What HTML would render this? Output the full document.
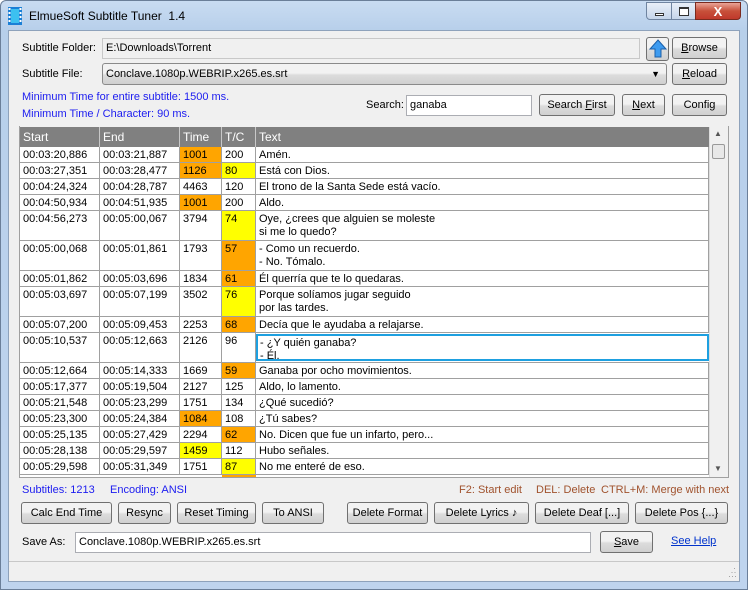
<!DOCTYPE html>
<html><head><meta charset="utf-8"><style>
*{box-sizing:border-box;margin:0;padding:0}
body{width:748px;height:590px;overflow:hidden;font-family:"Liberation Sans",sans-serif;font-size:11px;background:#fff;position:relative;color:#000}
.win{position:absolute;left:0;top:0;width:748px;height:590px;background:linear-gradient(#c9dcf2,#b7cfea 30px,#bfd4ee);border:1px solid #6b7f99;border-radius:6px 6px 0 0}
.client{position:absolute;left:8px;top:30px;width:732px;height:552px;background:#f0f0f0;border:1px solid #8ea2bb}
.a{position:absolute;white-space:nowrap}
.btn{position:absolute;height:22px;border:1px solid #707070;border-radius:3px;background:linear-gradient(#f2f2f2 45%,#dcdcdc 55%,#d0d0d0);text-align:center;line-height:20px;font-size:11px}
.inp{position:absolute;height:21px;border:1px solid #abadb3;background:#fff;line-height:19px;padding-left:3px}
.blue{color:#1c1cf0}
.brn{color:#a0522d}
.row{position:absolute;left:20px;width:689px;border-bottom:1px solid #a0a0a0;background:#fff}
.row div{position:absolute;top:0;bottom:0;border-right:1px solid #a0a0a0;padding:2px 0 0 3px;line-height:13px}
.c1{left:0;width:80px}.c2{left:80px;width:80px}.c3{left:160px;width:42px}.c4{left:202px;width:34px}.c5{left:236px;width:453px}
.o{background:#ffa500}.y{background:#ffff00}
.hd{position:absolute;left:20px;top:127px;width:689px;height:20px;background:#808080;color:#fff}
.hd div{position:absolute;top:0;height:20px;border-right:1px solid #c8c8c8;padding:3px 0 0 3px;font-size:12px}
</style></head><body>
<div class="win">
<svg class="a" style="left:7px;top:6px" width="14" height="18"><rect width="14" height="18" fill="#1a7fd6"/><rect x="3" y="2" width="8" height="14" fill="#3cc0f0"/><g fill="#fff"><rect x="0.5" y="1" width="2" height="2"/><rect x="0.5" y="5" width="2" height="2"/><rect x="0.5" y="9" width="2" height="2"/><rect x="0.5" y="13" width="2" height="2"/><rect x="11.5" y="1" width="2" height="2"/><rect x="11.5" y="5" width="2" height="2"/><rect x="11.5" y="9" width="2" height="2"/><rect x="11.5" y="13" width="2" height="2"/></g></svg>
<div class="a" style="left:28px;top:8px;font-size:12px">ElmueSoft Subtitle Tuner&nbsp; 1.4</div>
<div class="a" style="left:645px;top:1px;width:26px;height:18px;border:1px solid #6f84a0;border-radius:0 0 0 4px;background:linear-gradient(#e8eff8,#c5d5ea)"><div class="a" style="left:8px;top:10px;width:9px;height:3px;border:1px solid #333;background:#fff"></div></div>
<div class="a" style="left:670px;top:1px;width:25px;height:18px;border:1px solid #6f84a0;background:linear-gradient(#e8eff8,#c5d5ea)"><div class="a" style="left:7px;top:4px;width:10px;height:9px;border:1px solid #333;border-top-width:2px;background:#fff"></div></div>
<div class="a" style="left:694px;top:1px;width:46px;height:18px;border:1px solid #7a2a1e;border-radius:0 0 4px 0;background:linear-gradient(#e9a497,#c8503a 50%,#c0392b);color:#fff;font-weight:bold;text-align:center;line-height:17px;font-size:13px">X</div>
</div>
<div class="client"></div>
<div class="a" style="left:22px;top:42px">Subtitle Folder:</div>
<div class="inp" style="left:102px;top:38px;width:538px;background:#f0f0f0;border-color:#c8c8c8">E:\Downloads\Torrent</div>
<div class="btn" style="left:646px;top:37px;width:23px;height:24px"><svg width="20" height="20" style="margin-top:1px"><path d="M10 1 L18 10 H13 V18 H7 V10 H2 Z" fill="#3d9bf0" stroke="#1b5fa8"/></svg></div>
<div class="btn" style="left:672px;top:37px;width:55px"><u>B</u>rowse</div>
<div class="a" style="left:22px;top:68px">Subtitle File:</div>
<div class="btn" style="left:102px;top:63px;width:565px;text-align:left;padding-left:3px;border-color:#8a8a8a">Conclave.1080p.WEBRIP.x265.es.srt<span style="position:absolute;right:6px;font-size:9px">▼</span></div>
<div class="btn" style="left:672px;top:63px;width:55px"><u>R</u>eload</div>
<div class="a blue" style="left:22px;top:91px">Minimum Time for entire subtitle: 1500 ms.</div>
<div class="a blue" style="left:22px;top:108px">Minimum Time / Character: 90 ms.</div>
<div class="a" style="left:366px;top:99px">Search:</div>
<div class="inp" style="left:406px;top:95px;width:126px">ganaba</div>
<div class="btn" style="left:539px;top:94px;width:76px">Search <u>F</u>irst</div>
<div class="btn" style="left:622px;top:94px;width:43px"><u>N</u>ext</div>
<div class="btn" style="left:672px;top:94px;width:55px">Config</div>

<div class="hd"><div style="left:0;width:80px">Start</div><div style="left:80px;width:80px">End</div><div style="left:160px;width:42px">Time</div><div style="left:202px;width:34px">T/C</div><div style="left:236px;width:453px;border:none">Text</div></div>
<div class="a" style="left:19px;top:126px;width:710px;height:352px;border:1px solid #a0a0a0;border-top:none"></div>
<div class="a" style="left:709px;top:127px;width:18px;height:350px;background:#f0f0f0;border-left:1px solid #ddd"><div class="a" style="left:4px;top:2px;font-size:8px;color:#555">▲</div><div class="a" style="left:2px;top:17px;width:13px;height:15px;border:1px solid #999;border-radius:2px;background:#e8e8e8"></div><div class="a" style="left:4px;top:337px;font-size:8px;color:#555">▼</div></div>

<div class="row" style="top:147px;height:16px"><div class="c1">00:03:20,886</div><div class="c2">00:03:21,887</div><div class="c3 o">1001</div><div class="c4">200</div><div class="c5">Amén.</div></div>
<div class="row" style="top:163px;height:16px"><div class="c1">00:03:27,351</div><div class="c2">00:03:28,477</div><div class="c3 o">1126</div><div class="c4 y">80</div><div class="c5">Está con Dios.</div></div>
<div class="row" style="top:179px;height:16px"><div class="c1">00:04:24,324</div><div class="c2">00:04:28,787</div><div class="c3">4463</div><div class="c4">120</div><div class="c5">El trono de la Santa Sede está vacío.</div></div>
<div class="row" style="top:195px;height:16px"><div class="c1">00:04:50,934</div><div class="c2">00:04:51,935</div><div class="c3 o">1001</div><div class="c4">200</div><div class="c5">Aldo.</div></div>
<div class="row" style="top:211px;height:30px"><div class="c1">00:04:56,273</div><div class="c2">00:05:00,067</div><div class="c3">3794</div><div class="c4 y">74</div><div class="c5">Oye, ¿crees que alguien se moleste<br>si me lo quedo?</div></div>
<div class="row" style="top:241px;height:30px"><div class="c1">00:05:00,068</div><div class="c2">00:05:01,861</div><div class="c3">1793</div><div class="c4 o">57</div><div class="c5">- Como un recuerdo.<br>- No. Tómalo.</div></div>
<div class="row" style="top:271px;height:16px"><div class="c1">00:05:01,862</div><div class="c2">00:05:03,696</div><div class="c3">1834</div><div class="c4 o">61</div><div class="c5">Él querría que te lo quedaras.</div></div>
<div class="row" style="top:287px;height:30px"><div class="c1">00:05:03,697</div><div class="c2">00:05:07,199</div><div class="c3">3502</div><div class="c4 y">76</div><div class="c5">Porque solíamos jugar seguido<br>por las tardes.</div></div>
<div class="row" style="top:317px;height:16px"><div class="c1">00:05:07,200</div><div class="c2">00:05:09,453</div><div class="c3">2253</div><div class="c4 o">68</div><div class="c5">Decía que le ayudaba a relajarse.</div></div>
<div class="row" style="top:333px;height:30px"><div class="c1">00:05:10,537</div><div class="c2">00:05:12,663</div><div class="c3">2126</div><div class="c4">96</div><div class="c5" style="border:2px solid #1ea0e0;top:1px;bottom:1px;padding:1px 0 0 2px">- ¿Y quién ganaba?<br>- Él.</div></div>
<div class="row" style="top:363px;height:16px"><div class="c1">00:05:12,664</div><div class="c2">00:05:14,333</div><div class="c3">1669</div><div class="c4 o">59</div><div class="c5">Ganaba por ocho movimientos.</div></div>
<div class="row" style="top:379px;height:16px"><div class="c1">00:05:17,377</div><div class="c2">00:05:19,504</div><div class="c3">2127</div><div class="c4">125</div><div class="c5">Aldo, lo lamento.</div></div>
<div class="row" style="top:395px;height:16px"><div class="c1">00:05:21,548</div><div class="c2">00:05:23,299</div><div class="c3">1751</div><div class="c4">134</div><div class="c5">¿Qué sucedió?</div></div>
<div class="row" style="top:411px;height:16px"><div class="c1">00:05:23,300</div><div class="c2">00:05:24,384</div><div class="c3 o">1084</div><div class="c4">108</div><div class="c5">¿Tú sabes?</div></div>
<div class="row" style="top:427px;height:16px"><div class="c1">00:05:25,135</div><div class="c2">00:05:27,429</div><div class="c3">2294</div><div class="c4 o">62</div><div class="c5">No. Dicen que fue un infarto, pero...</div></div>
<div class="row" style="top:443px;height:16px"><div class="c1">00:05:28,138</div><div class="c2">00:05:29,597</div><div class="c3 y">1459</div><div class="c4">112</div><div class="c5">Hubo señales.</div></div>
<div class="row" style="top:459px;height:16px"><div class="c1">00:05:29,598</div><div class="c2">00:05:31,349</div><div class="c3">1751</div><div class="c4 y">87</div><div class="c5">No me enteré de eso.</div></div>
<div class="row" style="top:475px;height:2px;border:none"><div class="c4 o" style="border:none"></div></div>

<div class="a blue" style="left:22px;top:484px">Subtitles: 1213</div>
<div class="a blue" style="left:110px;top:484px">Encoding: ANSI</div>
<div class="a brn" style="left:459px;top:484px">F2: Start edit</div>
<div class="a brn" style="left:536px;top:484px">DEL: Delete</div>
<div class="a brn" style="left:601px;top:484px">CTRL+M: Merge with next</div>
<div class="btn" style="left:21px;top:502px;width:91px">Calc End Time</div>
<div class="btn" style="left:118px;top:502px;width:53px">Resync</div>
<div class="btn" style="left:177px;top:502px;width:79px">Reset Timing</div>
<div class="btn" style="left:262px;top:502px;width:62px">To ANSI</div>
<div class="btn" style="left:347px;top:502px;width:81px">Delete Format</div>
<div class="btn" style="left:434px;top:502px;width:95px">Delete Lyrics ♪</div>
<div class="btn" style="left:535px;top:502px;width:94px">Delete Deaf [...]</div>
<div class="btn" style="left:635px;top:502px;width:93px">Delete Pos {...}</div>
<div class="a" style="left:22px;top:536px">Save As:</div>
<div class="inp" style="left:75px;top:532px;width:516px">Conclave.1080p.WEBRIP.x265.es.srt</div>
<div class="btn" style="left:600px;top:531px;width:53px"><u>S</u>ave</div>
<div class="a" style="left:671px;top:535px;color:#0033cc;text-decoration:underline">See Help</div>
<div class="a" style="left:9px;top:561px;width:730px;height:1px;background:#c8c8c8"></div>
<div class="a" style="left:728px;top:566px;color:#999;font-size:9px;line-height:4px">&nbsp;&nbsp;·<br>&nbsp;··<br>···</div>
</body></html>
